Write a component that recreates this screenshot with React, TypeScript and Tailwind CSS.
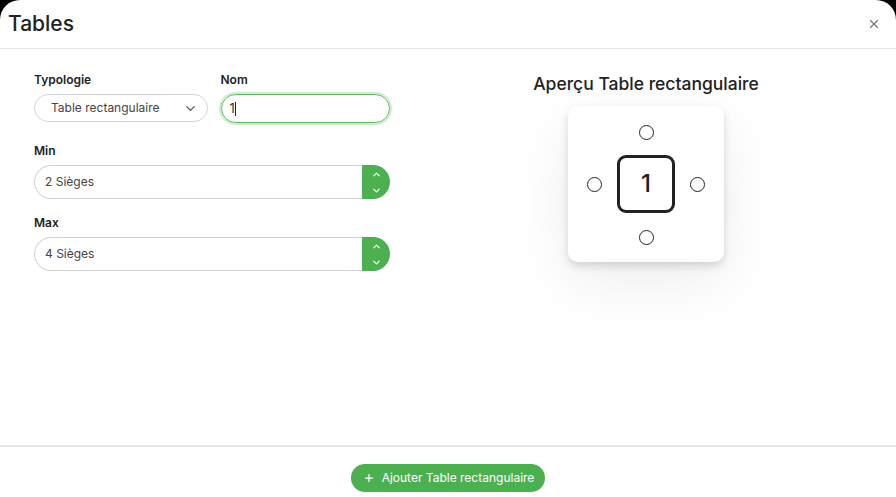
import { ChevronDown, ChevronUp, Plus, X } from 'lucide-react';

const font = { fontFamily: 'Inter, "Noto Sans", sans-serif' };

const Stepper: React.FC<{ label: string; value: string }> = ({ label, value }) => (
  <div>
    <div className="text-[12px] font-semibold text-[#222] leading-4 mb-[6px]">{label}</div>
    <div className="flex h-[34px] w-full">
      <div className="flex-1 flex items-center pl-[10px] text-[12px] text-[#444] border border-[#d4d4d4] border-r-0 rounded-l-full">
        {value}
      </div>
      <div className="w-[28px] bg-[#4caf50] rounded-r-full flex flex-col items-center justify-center gap-[5px] text-white">
        <ChevronUp size={11} strokeWidth={2.5} />
        <ChevronDown size={11} strokeWidth={2.5} />
      </div>
    </div>
  </div>
);

const Seat = () => <div className="w-[15px] h-[15px] rounded-full border border-[#222] bg-white" />;

export default function App() {
  return (
    <div className="min-h-screen bg-black" style={font}>
      <div className="bg-white rounded-t-[20px] h-[497px] flex flex-col overflow-hidden">
        <header className="h-[49px] flex items-center justify-between pl-[8px] pr-[15px] border-b border-[#e6e6e6] shrink-0">
          <h1 className="text-[21px] font-medium text-[#222]">Tables</h1>
          <X size={14} className="text-[#777]" />
        </header>
        <main className="flex-1 flex gap-[40px] px-[34px] pt-[23px]">
          <div className="w-[356px] flex flex-col">
            <div className="flex gap-[13px]">
              <div className="w-[174px]">
                <div className="text-[12px] font-semibold text-[#222] leading-4 mb-[6px]">Typologie</div>
                <div className="h-[28px] flex items-center justify-between pl-[16px] pr-[9px] border border-[#d4d4d4] rounded-full text-[12px] text-[#444]">
                  Table rectangulaire
                  <ChevronDown size={15} className="text-[#555]" />
                </div>
              </div>
              <div className="w-[170px]">
                <div className="text-[12px] font-semibold text-[#222] leading-4 mb-[6px]">Nom</div>
                <div className="h-[29px] flex items-center pl-[8px] border border-[#5fb85f] rounded-full ring-2 ring-[#4caf50]/25 text-[13px] text-[#333]">
                  1<span className="w-px h-[14px] bg-[#222]" />
                </div>
              </div>
            </div>
            <div className="mt-[20px]">
              <Stepper label="Min" value="2 Sièges" />
            </div>
            <div className="mt-[16px]">
              <Stepper label="Max" value="4 Sièges" />
            </div>
          </div>
          <div className="flex-1 flex flex-col items-center">
            <h2 className="text-[17.5px] font-medium text-[#222] leading-[22px] mt-[1px] mb-[11px]">
              Aperçu Table rectangulaire
            </h2>
            <div className="w-[156px] h-[156px] bg-white rounded-[10px] shadow-[0_4px_8px_rgba(0,0,0,0.15),0_20px_60px_rgba(0,0,0,0.07)] flex flex-col items-center pt-[19px]">
              <Seat />
              <div className="flex items-center gap-[15px] mt-[15px]">
                <Seat />
                <div className="w-[58px] h-[58px] border-[3px] border-[#222] rounded-[9px] flex items-center justify-center text-[24px] font-medium text-[#222]">
                  1
                </div>
                <Seat />
              </div>
              <div className="mt-[17px]">
                <Seat />
              </div>
            </div>
          </div>
        </main>
        <footer className="h-[52px] border-t-2 border-[#e8e8e8] flex justify-center pt-[17px] shrink-0">
          <button
            type="button"
            className="h-[28px] pl-[12px] pr-[11px] rounded-full bg-[#4caf50] text-white text-[12px] flex items-center gap-[7px]"
          >
            <Plus size={12} strokeWidth={2.5} />
            Ajouter Table rectangulaire
          </button>
        </footer>
      </div>
    </div>
  );
}
